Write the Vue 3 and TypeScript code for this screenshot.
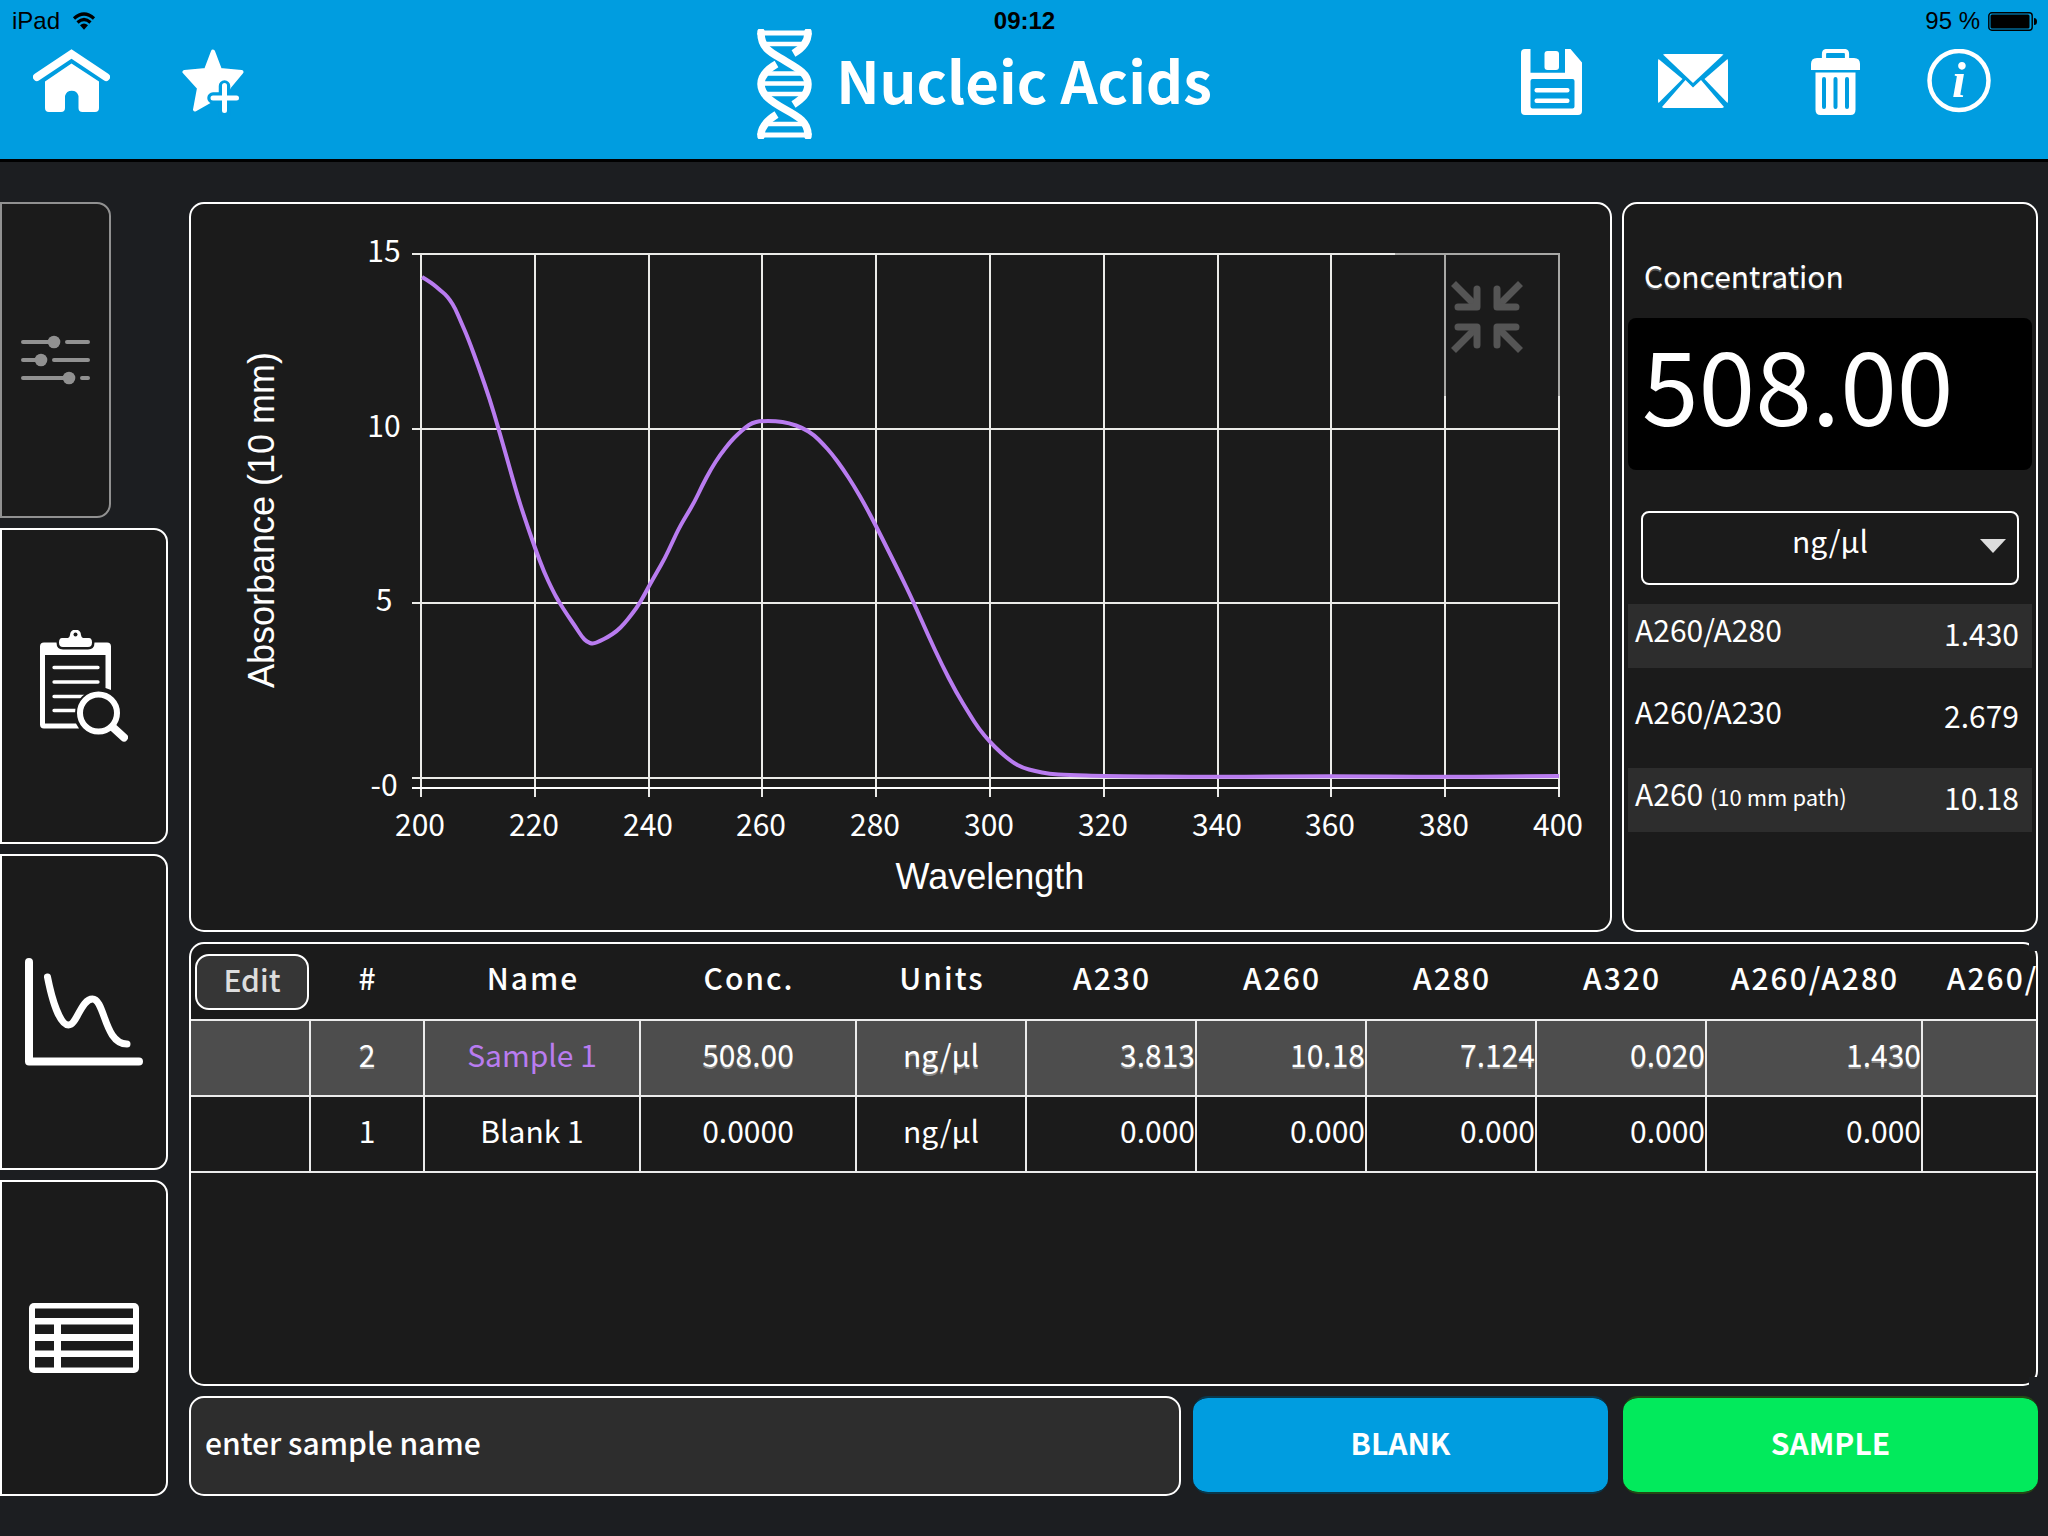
<script setup lang="ts">
import { ref } from 'vue'

type Point = [number, number]

interface Reading {
  label: string
  note?: string
  value: string
}

interface SampleRow {
  id: number
  name: string
  conc: string
  units: string
  values: string[]
  selected: boolean
}

const unit = ref('ng/µl')
const sampleName = ref('')

const readings: Reading[] = [
  { label: 'A260/A280', value: '1.430' },
  { label: 'A260/A230', value: '2.679' },
  { label: 'A260', note: '(10 mm path)', value: '10.18' },
]

const columns = ['#', 'Name', 'Conc.', 'Units', 'A230', 'A260', 'A280', 'A320', 'A260/A280', 'A260/A230']

const rows: SampleRow[] = [
  {
    id: 2,
    name: 'Sample 1',
    conc: '508.00',
    units: 'ng/µl',
    values: ['3.813', '10.18', '7.124', '0.020', '1.430'],
    selected: true,
  },
  {
    id: 1,
    name: 'Blank 1',
    conc: '0.0000',
    units: 'ng/µl',
    values: ['0.000', '0.000', '0.000', '0.000', '0.000'],
    selected: false,
  },
]

const xTicks = [
  { label: '200', x: 421 },
  { label: '220', x: 535 },
  { label: '240', x: 649 },
  { label: '260', x: 762 },
  { label: '280', x: 876 },
  { label: '300', x: 990 },
  { label: '320', x: 1104 },
  { label: '340', x: 1218 },
  { label: '360', x: 1331 },
  { label: '380', x: 1445 },
  { label: '400', x: 1559 },
]

const yTicks = [
  { label: '15', y: 254 },
  { label: '10', y: 429 },
  { label: '5', y: 603 },
  { label: '-0', y: 788 },
]

const spectrum: Point[] = [
  [422, 277], [432, 283], [441, 291], [445, 294], [450, 300], [455, 308], [461, 322], [468, 338], [479, 368],
  [490, 400], [498, 427], [508, 462], [517, 494], [524, 516], [535, 548], [544, 572], [553, 591],
  [559, 602], [568, 616], [575, 626], [582, 637], [587, 642], [593, 644], [600, 641], [608, 637],
  [617, 631], [624, 624], [632, 614], [640, 603], [649, 586], [657, 572], [665, 558], [672, 543],
  [680, 526], [694, 503], [702, 486], [711, 469], [720, 455], [731, 441], [738, 434], [746, 427],
  [752, 423], [760, 421], [776, 421], [789, 423], [803, 428], [814, 435], [823, 444], [832, 454],
  [843, 469], [854, 486], [865, 505], [876, 526], [888, 550], [900, 574], [913, 601], [928, 635],
  [942, 665], [956, 692], [970, 715], [979, 729], [990, 742], [1000, 752], [1012, 762], [1023, 768],
  [1035, 771], [1049, 774], [1068, 775], [1104, 776], [1218, 777], [1331, 776], [1445, 777], [1559, 776],
]

// Quadratic segments through the midpoints keep the trace smooth.
function smoothPath(points: Point[]): string {
  let d = `M${points[0][0]} ${points[0][1]}`
  for (let i = 1; i < points.length - 1; i++) {
    const [x, y] = points[i]
    const [nx, ny] = points[i + 1]
    d += `Q${x} ${y} ${(x + nx) / 2} ${(y + ny) / 2}`
  }
  const last = points[points.length - 1]
  return `${d}L${last[0]} ${last[1]}`
}

const trace = smoothPath(spectrum)
</script>

<template>
  <div class="app">
    <header class="header">
      <div class="status">
        <span class="status-left">
          iPad
          <svg viewBox="0 0 24 18" width="24" height="18" aria-hidden="true">
            <path d="M2 6.500Q12-2.500 22 6.500M5.500 10.500Q12 4.500 18.500 10.500" fill="none" stroke="#000" stroke-width="3.200" />
            <path d="M8 13.200Q12 9.800 16 13.200L12 17.800Z" />
          </svg>
        </span>
        <strong class="clock">09:12</strong>
        <span class="status-right">
          95 %
          <svg viewBox="0 0 49 19" width="49" height="19" aria-hidden="true">
            <rect x="0.800" y="0.800" width="43.400" height="17.400" rx="3" fill="none" stroke="#000" stroke-width="1.400" />
            <rect x="2.500" y="2.500" width="39" height="14" rx="1.500" />
            <path d="M46 6q3 0 3 3.500t-3 3.500z" />
          </svg>
        </span>
      </div>

      <div class="toolbar">
        <nav class="tools" aria-label="Main">
          <button class="tool" type="button" aria-label="Home">
            <svg viewBox="0 0 77 70" width="77" height="70">
              <path d="M4 28L38.500 5L73 28" fill="none" stroke="#fff" stroke-width="8" stroke-linecap="round" />
              <path d="M38.500 14.500L66 32.500V59q0 4-4 4H49.500q-4 0-4-4V47a7 7 0 0 0-13.500 0V59q0 4-4 4H16q-4 0-4-4V32.500Z" fill="#fff" />
            </svg>
          </button>
          <button class="tool" type="button" aria-label="Add to favourites">
            <svg viewBox="0 0 62 70" width="62" height="70">
              <path d="M31 2.500L38 21L59.500 23L47 38L42 48L28 52L13 60.500L17 39L2.500 23L24 21Z" fill="#fff" stroke="#fff" stroke-width="4" stroke-linejoin="round" />
              <path d="M42.500 37V66M31 49H58" fill="none" stroke="#009de0" stroke-width="11.500" stroke-linecap="round" />
              <path d="M42.500 36.500V61.500M31 49H54.500" fill="none" stroke="#fff" stroke-width="5" stroke-linecap="round" />
            </svg>
          </button>
          <svg class="dna" viewBox="0 0 55 110" width="55" height="110" aria-hidden="true">
            <g fill="none" stroke="#fff">
              <g stroke-width="7.500">
                <path d="M4 4C4 20 15 24 27.500 31.500C42 40 51 45 51 55C51 65 45 70 36.500 75.500" />
                <path d="M19.500 35C9 41 4 47 4 55C4 66 15 73 27.500 80C42 88 51 93 51 106" />
                <path d="M51 4C51 13 46 19 36.500 24.500" />
                <path d="M19.500 85.500C9 92 4 98 4 106" />
              </g>
              <path d="M4 4V3M51 4V3M4 106V107M51 106V107" stroke-width="7.500" stroke-linecap="round" />
              <path d="M4 4H51M4 106H51" stroke-width="5" />
              <path d="M9 15H45M9 44.500H46M5 54.500H50M9 65H46M9 95H46" stroke-width="4.500" />
            </g>
          </svg>
        </nav>
        <h1 class="title">Nucleic Acids</h1>
        <nav class="tools tools-end" aria-label="Actions">
          <button class="tool" type="button" aria-label="Save">
            <svg viewBox="0 0 61 70" width="61" height="70" fill="#fff">
              <path fill-rule="evenodd" d="M4 0H9.500V23.700H44V0H49.500L61 13.500V62q0 4-4 4H4q-4 0-4-4V4q0-4 4-4ZM11.500 30q-2 0-2 2V57.500q0 2 2 2H51.500q2 0 2-2V32q0-2-2-2Z" />
              <rect x="23.500" y="2" width="14.500" height="19" rx="3" />
              <rect x="13.500" y="39" width="35" height="4.500" rx="2" />
              <rect x="13.500" y="49.500" width="35" height="4.500" rx="2" />
            </svg>
          </button>
          <button class="tool" type="button" aria-label="Send by e-mail">
            <svg viewBox="0 0 70 70" width="70" height="70" fill="#fff">
              <path d="M5 5.500Q6 5 7 5H63Q64.500 5 65.500 5.500L35 34Z" />
              <path d="M0.500 10L24.500 30L0.500 54Q0 53 0 51V13Q0 11 0.500 10Z" />
              <path d="M69.500 10L46.500 30L69.500 54Q70 53 70 51V13Q70 11 69.500 10Z" />
              <path d="M4 58L27.500 31L35 38.500L43 31L66 58Q65 59 64 59H6Q5 59 4 58Z" />
            </svg>
          </button>
          <button class="tool" type="button" aria-label="Delete">
            <svg viewBox="0 0 49 70" width="49" height="70">
              <path d="M13 11V5q0-3 3-3H33q3 0 3 3V11" fill="none" stroke="#fff" stroke-width="4.200" />
              <path d="M0 21V15q0-6 6-6H43q6 0 6 6V21Z" fill="#fff" />
              <path d="M4.500 23.500H44.500V60.500q0 5.500-5 5.500H9.500q-5 0-5-5.500Z" fill="#fff" />
              <path d="M13 30V58M24.500 30V58M36 30V58" stroke="#009de0" stroke-width="4" stroke-linecap="round" />
            </svg>
          </button>
          <button class="tool tool-narrow" type="button" aria-label="Information">
            <svg viewBox="0 0 64 70" width="64" height="70">
              <circle cx="32" cy="31.500" r="29.500" fill="none" stroke="#fff" stroke-width="4.500" />
              <text x="32" y="48" class="info-letter" text-anchor="middle">i</text>
            </svg>
          </button>
        </nav>
      </div>
    </header>

    <div class="body">
      <nav class="sidebar" aria-label="Views">
        <button class="tab tab-dim" type="button" aria-label="Parameters">
          <svg viewBox="0 0 69 50" width="69" height="50">
            <path d="M2 7H33M46 7H67M2 25H20M33 25H67M2 43H48M61 43H67" stroke="#919191" stroke-width="4" stroke-linecap="round" />
            <g fill="#919191">
              <circle cx="33" cy="7" r="6.300" />
              <circle cx="20" cy="25" r="6.300" />
              <circle cx="48" cy="43" r="6.300" />
            </g>
          </svg>
        </button>
        <button class="tab" type="button" aria-label="Review results">
          <svg viewBox="0 0 88 112" width="88" height="112">
            <path fill="#fff" fill-rule="evenodd" d="M4 12.500H67q4 0 4 4V60L65.500 58V25H5V93.500H36L39 98.500H4q-4 0-4-4V16.500q0-4 4-4Z" />
            <path d="M14 37.500H58M14 52H58M14 66.500H44M14 80.500H38" stroke="#fff" stroke-width="3.300" stroke-linecap="round" />
            <path d="M22 8H28Q29.500 8 30 5A5.500 5.500 0 0 1 41 5Q41.500 8 43 8H49Q52 8 52 12.500T48 17H23Q19 17 19 12.500T22 8Z" fill="#fff" stroke="#1b1b1b" stroke-width="5" paint-order="stroke" />
            <circle cx="35.500" cy="4.500" r="2" fill="#1b1b1b" />
            <circle cx="58.500" cy="83" r="21" fill="#1b1b1b" stroke="#1b1b1b" stroke-width="5" />
            <path d="M72 96.500L84 107.500" stroke="#fff" stroke-width="8" stroke-linecap="round" />
            <circle cx="58.500" cy="83" r="18.500" fill="#1b1b1b" stroke="#fff" stroke-width="6" />
          </svg>
        </button>
        <button class="tab" type="button" aria-label="Graph">
          <svg viewBox="0 0 118 108" width="118" height="108" fill="none" stroke="#fff" stroke-linecap="round" stroke-linejoin="round">
            <path d="M4 4V103.500H114" stroke-width="8" />
            <path d="M22.500 19C27 42 35 67 43.500 67C52 67 56 41 67.500 41C80 41 79 86 102 86" stroke-width="7" />
          </svg>
        </button>
        <button class="tab" type="button" aria-label="Table">
          <svg viewBox="0 0 110 70" width="110" height="70">
            <rect width="110" height="70" rx="5" fill="#fff" />
            <path d="M6 5.500H104V15H6ZM6 21.500H25V31H6ZM32 21.500H104V31H32ZM6 38H25V47.500H6ZM32 38H104V47.500H32ZM6 54H25V64.500H6ZM32 54H104V64.500H32Z" fill="#1b1b1b" />
          </svg>
        </button>
      </nav>

      <main class="main">
        <div class="upper">
          <section class="panel chart-panel">
            <svg class="chart" viewBox="191 204 1419 726" role="img" aria-label="Absorbance spectrum">
              <g class="grid">
                <line v-for="t in xTicks" :key="t.label" :x1="t.x" :x2="t.x" y1="254" y2="797" />
                <line x1="412" x2="1560" y1="254" y2="254" />
                <line x1="412" x2="1560" y1="429" y2="429" />
                <line x1="412" x2="1560" y1="603" y2="603" />
                <line x1="412" x2="1560" y1="778" y2="778" />
                <line class="axis" x1="412" x2="1560" y1="788" y2="788" />
              </g>
              <path class="trace" :d="trace" />
              <g class="tick-labels">
                <text v-for="t in xTicks" :key="t.label" :x="t.x - 1" y="836">{{ t.label }}</text>
                <text v-for="t in yTicks" :key="t.label" x="384" :y="t.y + 8">{{ t.label }}</text>
              </g>
              <g class="axis-titles">
                <text x="990" y="889">Wavelength</text>
                <text transform="translate(274 520) rotate(-90)">Absorbance (10 mm)</text>
              </g>
            </svg>
            <button class="collapse" type="button" aria-label="Shrink chart">
              <svg viewBox="0 0 72 72" width="72" height="72" fill="none" stroke="#555" stroke-width="7">
                <path d="M2.500 2.500L25 25M69.500 2.500L47 25M2.500 69.500L25 47M69.500 69.500L47 47" />
                <path d="M26 8V26H7M46 8V26H65M26 64V46H7M46 64V46H65" stroke-linecap="round" stroke-linejoin="round" />
              </svg>
            </button>
          </section>

          <section class="panel result">
            <h2 class="result-title">Concentration</h2>
            <output class="result-value">508.00</output>
            <div class="unit">
              <select v-model="unit" class="unit-select" aria-label="Concentration unit">
                <option>ng/µl</option>
                <option>µg/ml</option>
              </select>
              <svg class="unit-arrow" viewBox="0 0 26 14" width="26" height="14" aria-hidden="true">
                <path d="M0 0H26L13 14Z" fill="#ddd" />
              </svg>
            </div>
            <dl class="readings">
              <div v-for="r in readings" :key="r.label" class="reading">
                <dt>{{ r.label }} <small v-if="r.note">{{ r.note }}</small></dt>
                <dd>{{ r.value }}</dd>
              </div>
            </dl>
          </section>
        </div>

        <section class="panel samples">
          <div class="samples-scroll">
            <table>
              <colgroup>
                <col class="c-edit" />
                <col class="c-index" />
                <col class="c-wide" />
                <col class="c-wide" />
                <col v-for="n in 5" :key="n" class="c-mid" />
                <col class="c-wide" />
                <col class="c-wide" />
              </colgroup>
              <thead>
                <tr>
                  <th class="edit-cell"><button class="edit" type="button">Edit</button></th>
                  <th v-for="c in columns" :key="c" scope="col">{{ c }}</th>
                </tr>
              </thead>
              <tbody>
                <tr v-for="row in rows" :key="row.id" :class="{ selected: row.selected }">
                  <td></td>
                  <td>{{ row.id }}</td>
                  <td class="name">{{ row.name }}</td>
                  <td>{{ row.conc }}</td>
                  <td>{{ row.units }}</td>
                  <td v-for="(v, i) in row.values" :key="i" class="number">{{ v }}</td>
                  <td></td>
                </tr>
              </tbody>
            </table>
          </div>
        </section>

        <form class="entry" @submit.prevent>
          <input v-model="sampleName" class="entry-name" type="text" placeholder="enter sample name" aria-label="Sample name" />
          <div class="entry-actions">
            <button class="action blank" type="button">BLANK</button>
            <button class="action sample" type="submit">SAMPLE</button>
          </div>
        </form>
      </main>
    </div>
  </div>
</template>

<style>
body {
  background: #1c1e21;
}
</style>

<style scoped>
.app,
.app * {
  box-sizing: border-box;
}

.app {
  display: flex;
  flex-direction: column;
  min-height: 100vh;
  overflow-x: hidden;
  background: #1c1e21;
  color: #fff;
  font-family: "Noto Sans CJK SC", "Noto Sans", sans-serif;
  font-size: 30px;
}

button,
input,
select {
  font: inherit;
  color: inherit;
  margin: 0;
}

button {
  padding: 0;
  border: 0;
  background: none;
  cursor: pointer;
}

svg {
  display: block;
  flex: none;
}

/* Header */
.header {
  background: #009de0;
  border-bottom: 3px solid #000;
  padding-bottom: 20px;
}

.status {
  display: grid;
  grid-template-columns: 1fr auto 1fr;
  height: 42px;
  padding: 0 11px 0 12px;
  color: #000;
  font: 24px/42px "Liberation Sans", Arial, sans-serif;
}

.status-left,
.status-right {
  display: flex;
  align-items: center;
  gap: 12px;
}

.status-right {
  justify-content: flex-end;
  gap: 8px;
}

.toolbar {
  display: grid;
  grid-template-columns: 1fr auto 1fr;
  align-items: start;
  margin-top: -13px;
}

.tools {
  display: flex;
  align-items: center;
  height: 110px;
}

.tools-end {
  justify-content: flex-end;
  padding-right: 36px;
}

.tool {
  display: flex;
  justify-content: center;
  width: 142px;
}

.tool-narrow {
  width: 106px;
}

.dna {
  margin-left: auto;
}

.title {
  margin: 0 24px;
  font-size: 58px;
  line-height: 100px;
  font-weight: 700;
}

.info-letter {
  fill: #fff;
  font: italic 700 50px "Liberation Serif", serif;
}

/* Page body */
.body {
  display: flex;
  flex: 1;
  gap: 21px;
  padding: 40px 10px 40px 0;
}

.sidebar {
  display: flex;
  flex-direction: column;
  gap: 10px;
  width: 168px;
  flex: none;
}

.tab {
  display: flex;
  flex: 1;
  align-items: center;
  justify-content: center;
  width: 168px;
  border: 2px solid #fff;
  border-radius: 0 14px 14px 0;
  background: #1b1b1b;
}

.tab-dim {
  width: 111px;
  border-color: #919191;
}

.main {
  display: flex;
  flex: 1;
  flex-direction: column;
  gap: 10px;
  min-width: 0;
}

.panel {
  border: 2px solid #fff;
  border-radius: 15px;
  background: #1b1b1b;
}

.upper {
  display: flex;
  gap: 10px;
}

/* Chart */
.chart-panel {
  position: relative;
  flex: 1;
  min-width: 0;
}

.chart {
  width: 100%;
  height: auto;
}

.grid line {
  stroke: #ebebe8;
  stroke-width: 2;
}

.grid .axis {
  stroke: #fff;
}

.trace {
  fill: none;
  stroke: #b97cf0;
  stroke-width: 4;
  stroke-linejoin: round;
}

.tick-labels {
  fill: #fff;
  font-size: 30px;
  text-anchor: middle;
}

.axis-titles {
  fill: #fff;
  font: 36px "Liberation Sans", Arial, sans-serif;
  text-anchor: middle;
}

.collapse {
  position: absolute;
  top: 34px;
  right: 31px;
  display: flex;
  align-items: center;
  justify-content: center;
  width: 184px;
  height: 158px;
  background: rgb(27 27 27 / 32%);
}

/* Result */
.result {
  display: flex;
  flex-direction: column;
  width: 416px;
  flex: none;
  padding: 51px 4px 0;
}

.result-title {
  margin: 0 0 23px;
  padding-left: 16px;
  font-size: 30px;
  line-height: 40px;
  font-weight: 400;
  text-shadow: 0 2px 0 #555;
}

.result-value {
  padding: 0 14px 24px;
  border-radius: 8px;
  background: #000;
  font-size: 102px;
  line-height: 128px;
}

.unit {
  position: relative;
  margin: 41px 13px 19px;
}

.unit-select {
  display: block;
  width: 100%;
  height: 74px;
  padding: 0 40px 16px;
  border: 2px solid #fff;
  border-radius: 8px;
  background: #1b1b1b;
  appearance: none;
  text-align: center;
  text-align-last: center;
}

.unit-arrow {
  position: absolute;
  top: 28px;
  right: 13px;
  pointer-events: none;
}

.readings {
  display: flex;
  flex-direction: column;
  gap: 18px;
  margin: 0;
}

.reading {
  display: flex;
  justify-content: space-between;
  height: 64px;
  padding: 0 13px 0 7px;
}

.reading:nth-child(odd) {
  background: #2d2d2d;
}

.reading dt {
  line-height: 50px;
}

.reading dd {
  margin: 0;
  line-height: 58px;
}

.reading small {
  font-size: 22px;
  line-height: 30px;
}

/* Samples table */
.samples {
  position: relative;
  flex: 1;
  min-height: 443px;
}

/* The frame is left open at its right-hand corners. */
.samples::before,
.samples::after {
  position: absolute;
  right: -2px;
  width: 9px;
  height: 9px;
  background: #1c1e21;
  content: "";
}

.samples::before {
  top: -2px;
}

.samples::after {
  bottom: -2px;
}

.samples-scroll {
  overflow: hidden;
}

table {
  width: 1948px;
  table-layout: fixed;
  border-collapse: separate;
  border-spacing: 0;
}

.c-edit {
  width: 120px;
}

.c-index {
  width: 114px;
}

.c-wide {
  width: 216px;
}

.c-mid {
  width: 170px;
}

th {
  height: 77px;
  padding: 0 0 9px;
  border-bottom: 2px solid #ebebeb;
  font-weight: 500;
  letter-spacing: 2px;
  line-height: 44px;
}

.edit-cell {
  padding: 0 2px 0 4px;
}

.edit {
  display: block;
  width: 100%;
  height: 56px;
  padding-bottom: 6px;
  border: 2px solid #fff;
  border-radius: 14px;
  background: #363636;
  color: #ddd;
  font-weight: 500;
  letter-spacing: normal;
  line-height: 44px;
}

td {
  height: 76px;
  padding: 0 0 8px;
  border-right: 2px solid #ebebeb;
  border-bottom: 2px solid #ebebeb;
  line-height: 44px;
  text-align: center;
}

.number {
  text-align: right;
}

.selected td {
  background: #4d4d4d;
  text-shadow: 0 2px 0 #888;
}

.selected .name {
  color: #b97cf0;
  text-shadow: none;
}

/* Sample entry */
.entry {
  display: flex;
  align-items: flex-start;
  gap: 12px;
}

.entry-name {
  flex: 1;
  min-width: 0;
  height: 100px;
  padding: 0 14px 8px;
  border: 2px solid #fff;
  border-radius: 15px;
  background: #2d2d2d;
  font-weight: 500;
}

.entry-name::placeholder {
  color: #fff;
  opacity: 1;
}

.entry-actions {
  display: flex;
  gap: 15px;
}

.action {
  width: 415px;
  height: 98px;
  padding-bottom: 6px;
  border-style: solid;
  border-width: 2px 0;
  border-radius: 15px;
  font-weight: 700;
}

.blank {
  border-color: #08384d;
  background: #009de0;
  background-clip: padding-box;
}

.sample {
  border-color: #234a14;
  background: #02ea5c;
  background-clip: padding-box;
}
</style>
